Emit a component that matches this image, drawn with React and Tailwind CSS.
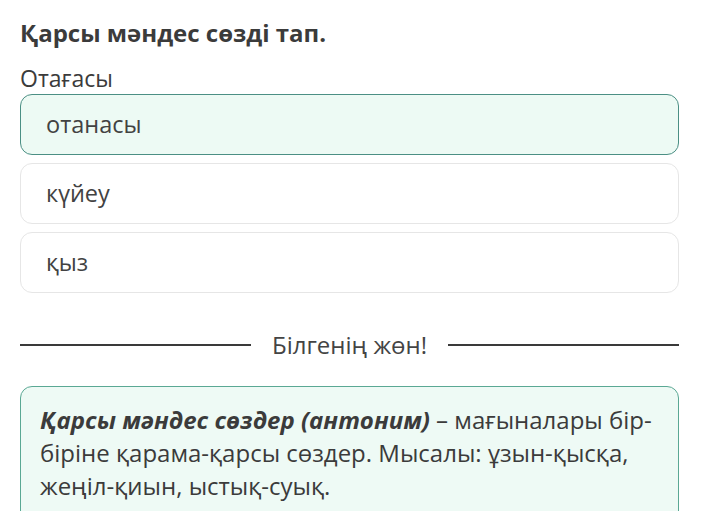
import React from 'react';

const options = [
  { label: 'отанасы', selected: true },
  { label: 'күйеу', selected: false },
  { label: 'қыз', selected: false },
];

const App = () => {
  return (
    <div className="w-[709px] h-[511px] overflow-hidden bg-white px-[20px] pt-[16px] text-[#3b3b3b]" style={{ fontFamily: '"Open Sans", "Noto Sans", sans-serif' }}>
      <h1 className="text-[24px] leading-[34px] font-bold">Қарсы мәндес сөзді тап.</h1>
      <p className="text-[23px] leading-[32px] mt-[12px]">Отағасы</p>

      <div className="flex flex-col gap-[8px] w-[659px]">
        {options.map((o) => (
          <div
            key={o.label}
            className={`h-[61px] flex items-center px-[25px] rounded-[12px] border text-[23.5px] text-[#424242] ${
              o.selected ? 'bg-[#edfaf4] border-[#4b8f84]' : 'bg-white border-[#e6e6e6]'
            }`}
          >
            {o.label}
          </div>
        ))}
      </div>

      <div className="flex items-center gap-[21px] w-[659px] mt-[37px]">
        <div className="flex-1 h-[2px] bg-[#3a3a3a]" />
        <span className="text-[24px] leading-[30px] text-[#444]">Білгенің жөн!</span>
        <div className="flex-1 h-[2px] bg-[#3a3a3a]" />
      </div>

      <div className="w-[659px] mt-[26px] rounded-[12px] border border-[#5aa894] bg-[#eefaf5] pl-[19px] pr-[10px] pt-[16px] pb-[20px] text-[24px] leading-[33px]">
        <span className="font-bold italic">Қарсы мәндес сөздер (антоним)</span> – мағыналары бір-біріне қарама-қарсы сөздер. Мысалы: ұзын-қысқа, жеңіл-қиын, ыстық-суық.
      </div>
    </div>
  );
};

export default App;
